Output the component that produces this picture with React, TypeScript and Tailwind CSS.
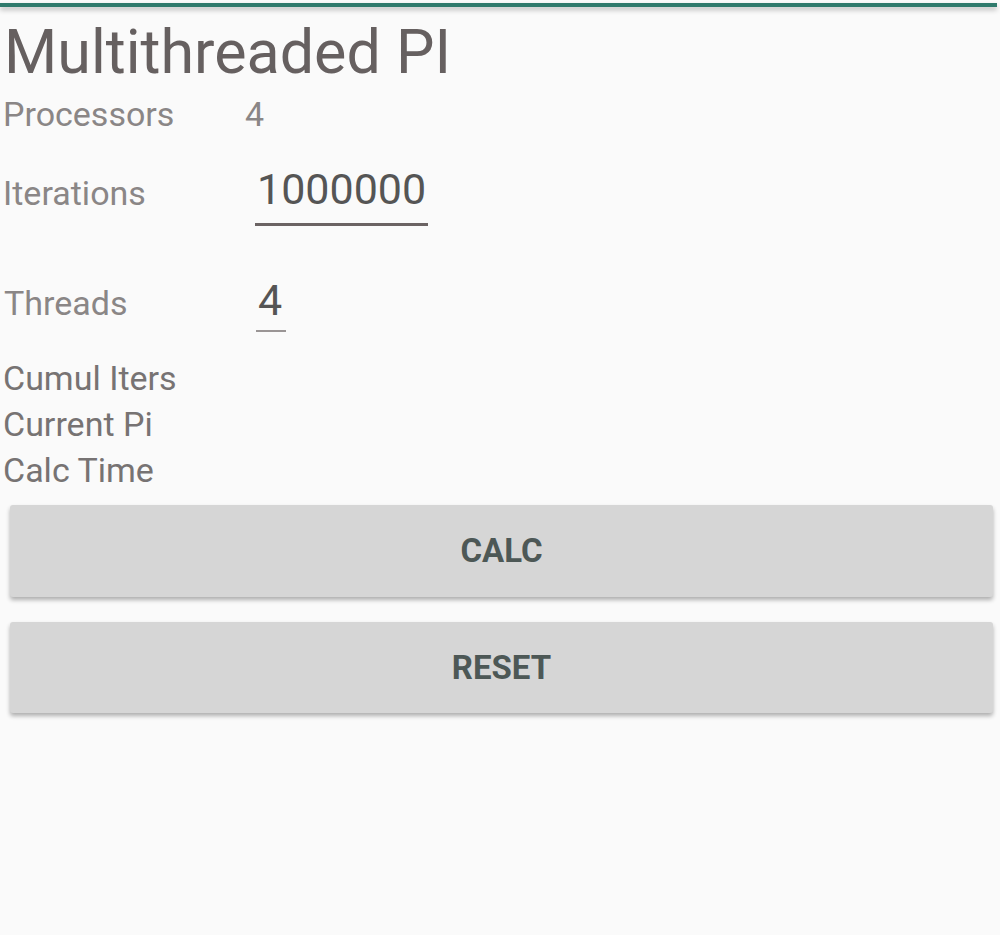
export default function App() {
    const font = { fontFamily: "Roboto, 'Noto Sans', sans-serif" };
    return (
        <div className="w-[1000px] h-[935px] bg-[#fafafa] flex flex-col" style={font}>
            <div className="h-[8px] pt-[3px] pr-[3px]">
                <div className="h-[4px] bg-[#2f7a6c] shadow-[0_3px_5px_rgba(0,0,0,0.25)]"></div>
            </div>
            <div className="flex-1 flex flex-col pl-[3px] pr-[5px]">
                <h1 className="h-[80px] mt-[4px] text-[61px] leading-[80px] text-[#666060] ml-[1px]">Multithreaded PI</h1>
                <div className="flex items-center h-[44px] text-[34px] leading-[40px] text-[#8a8686]">
                    <span className="w-[242px]">Processors</span>
                    <span>4</span>
                </div>
                <div className="flex items-start h-[124px] text-[34px] leading-[40px] text-[#8a8686]">
                    <span className="w-[252px] mt-[37px]">Iterations</span>
                    <div className="flex flex-col mt-[31px]">
                        <span className="text-[43px] leading-[44px] text-[#555] px-[2px]">1000000</span>
                        <div className="h-[3px] bg-[#6b6363] mt-[12px]"></div>
                    </div>
                </div>
                <div className="flex items-start h-[95px] text-[34px] leading-[40px] text-[#8a8686]">
                    <span className="w-[252px] mt-[23px] ml-[1px]">Threads</span>
                    <div className="flex flex-col mt-[18px]">
                        <span className="text-[43px] leading-[44px] text-[#555] px-[2px]">4</span>
                        <div className="h-[2px] w-[30px] bg-[#9a9595] mt-[8px]"></div>
                    </div>
                </div>
                <div className="flex flex-col text-[34px] leading-[46px] text-[#777373]">
                    <span>Cumul Iters</span>
                    <span>Current Pi</span>
                    <span>Calc Time</span>
                </div>
                <div className="flex flex-col gap-[25px] mt-[12px] pl-[7px] pr-[2px]">
                    <button className="h-[92px] bg-[#d6d6d6] rounded-[3px] shadow-[0_3px_4px_rgba(0,0,0,0.3)] text-[33px] font-bold text-[#4d5856]">CALC</button>
                    <button className="h-[91px] bg-[#d6d6d6] rounded-[3px] shadow-[0_3px_4px_rgba(0,0,0,0.3)] text-[33px] font-bold text-[#4d5856]">RESET</button>
                </div>
            </div>
        </div>
    );
}
